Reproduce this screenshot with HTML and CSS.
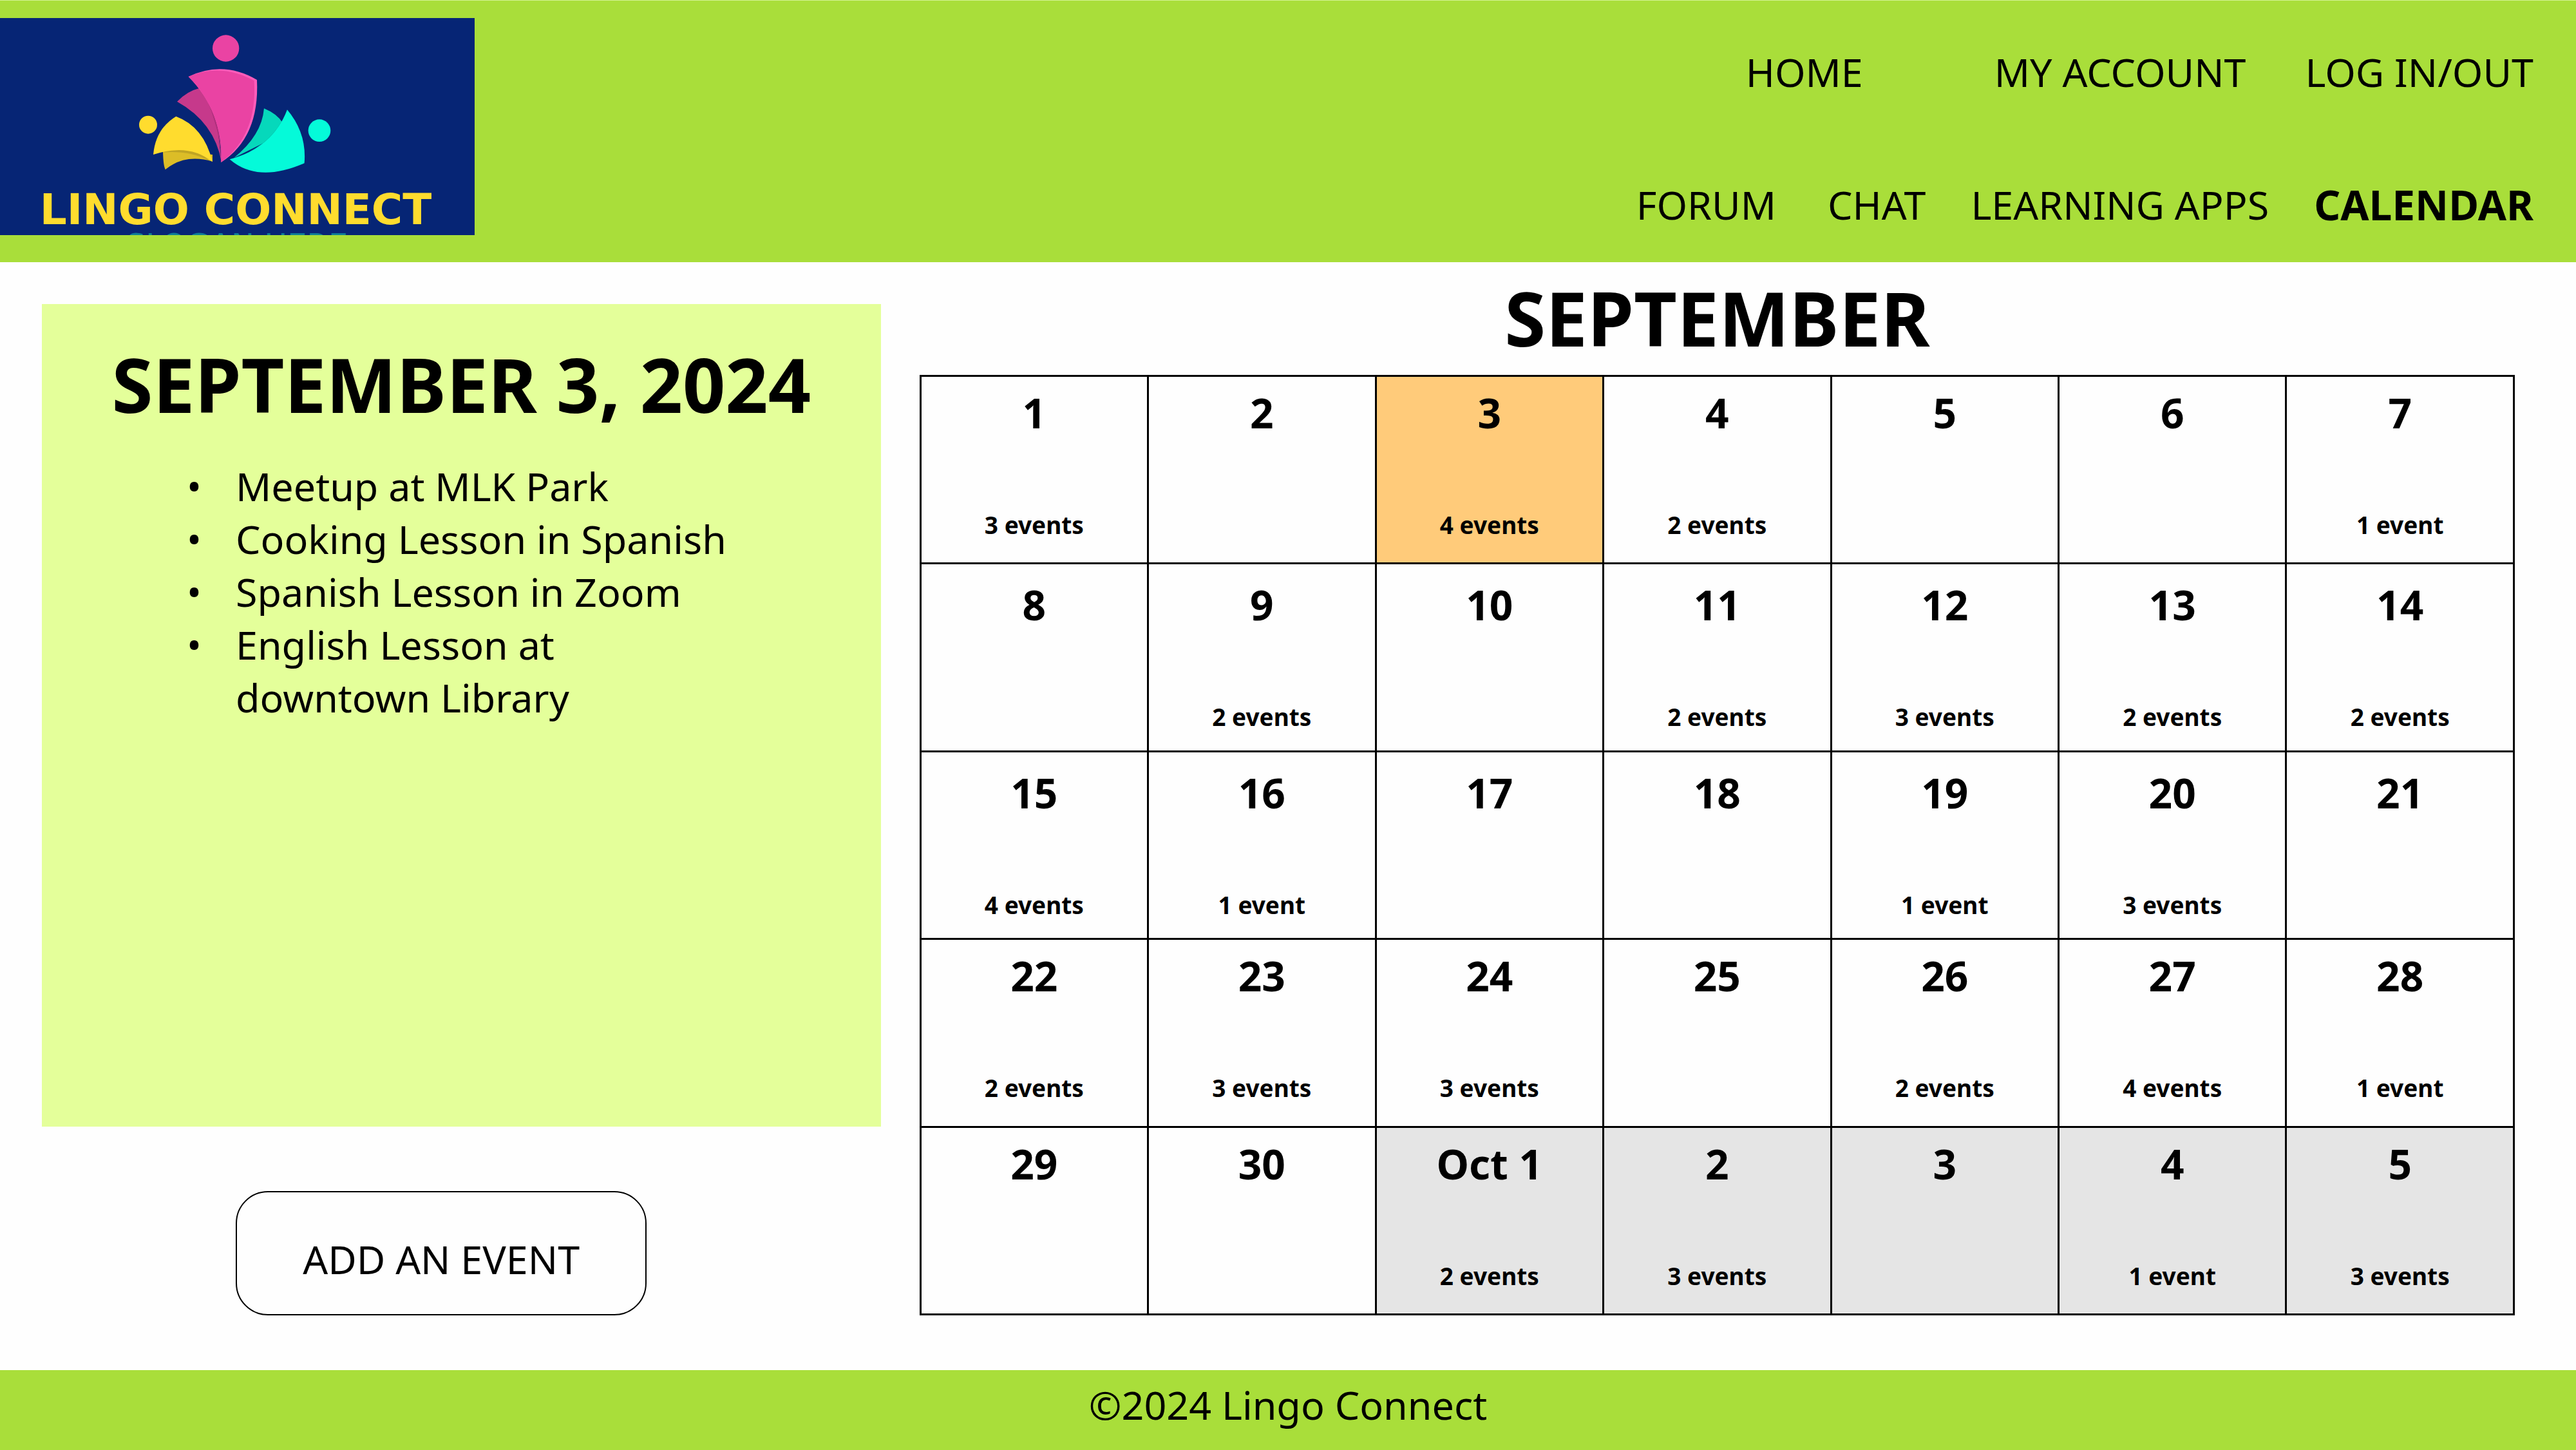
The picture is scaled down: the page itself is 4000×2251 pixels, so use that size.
FILE: index.html
```html
<!DOCTYPE html>
<html lang="en">
<head>
<meta charset="utf-8">
<title>Lingo Connect – Calendar</title>
<link rel="stylesheet" href="styles.css">
</head>
<body>
<header class="site-header">
  <a class="logo" href="#" aria-label="Lingo Connect">
    <svg class="logo-art" viewBox="0 0 737 337">
      <g transform="translate(200 12) scale(.3333)">
        <circle cx="452" cy="105" r="62" fill="#ea43a3"/>
        <path fill="#c6398b" d="M225 353Q270 305 330 290L400 350L432 636Q400 450 225 353Z"/>
        <path fill="#ad2f7c" d="M330 290Q425 380 432 636Q425 520 398 440Q375 350 330 290Z"/>
        <path fill="#ff5cba" d="M278 237Q440 160 597 252Q610 520 430 636Q440 400 278 237Z"/>
        <path fill="#ea43a3" d="M278 237Q430 172 584 256Q600 510 430 636Q440 400 278 237Z"/>
        <circle cx="90" cy="461" r="42" fill="#ffdc2e"/>
        <path fill="#dcbd27" d="M159 580L390 600L390 632Q260 595 170 670Q160 650 159 580Z"/>
        <path fill="#c0a524" d="M159 590Q280 580 375 628Q300 560 200 570Z"/>
        <path fill="#ffdc2e" d="M114 600Q125 480 220 422Q350 470 390 634Q280 545 114 600Z"/>
        <circle cx="888" cy="488" r="52" fill="#05fad9"/>
        <path fill="#06d8bb" d="M630 385Q690 410 715 450L680 520L490 615Q620 510 630 385Z"/>
        <path fill="#05bfa8" d="M712 445Q640 570 490 615Q660 560 715 450Z"/>
        <path fill="#05fad9" d="M738 391Q830 500 818 640Q600 735 470 622Q670 570 738 391Z"/>
      </g>
      <text class="logo-name" x="366" y="320" text-anchor="middle">LINGO CONNECT</text>
      <text class="logo-slogan" x="368" y="369" text-anchor="middle">SLOGAN HERE</text>
    </svg>
  </a>
  <nav class="site-nav">
    <div class="nav-row nav-account">
      <a href="#">HOME</a>
      <a href="#">MY ACCOUNT</a>
      <a href="#">LOG IN/OUT</a>
    </div>
    <div class="nav-row nav-sections">
      <a href="#">FORUM</a>
      <a href="#">CHAT</a>
      <a href="#">LEARNING APPS</a>
      <a class="current" href="#" aria-current="page">CALENDAR</a>
    </div>
  </nav>
</header>
<main class="content">
  <section class="sidebar">
    <div class="day-panel">
      <h2 class="title">SEPTEMBER 3, 2024</h2>
      <ul class="event-list">
        <li>Meetup at MLK Park</li>
        <li>Cooking Lesson in Spanish</li>
        <li>Spanish Lesson in Zoom</li>
        <li>English Lesson at<br>downtown Library</li>
      </ul>
    </div>
    <button class="add-event" type="button">ADD AN EVENT</button>
  </section>
  <section class="month">
    <h1 class="title">SEPTEMBER</h1>
    <table class="calendar">
      <tbody>
        <tr>
          <td><b>1</b><span>3 events</span></td>
          <td><b>2</b></td>
          <td class="selected"><b>3</b><span>4 events</span></td>
          <td><b>4</b><span>2 events</span></td>
          <td><b>5</b></td>
          <td><b>6</b></td>
          <td><b>7</b><span>1 event</span></td>
        </tr>
        <tr class="roomy">
          <td><b>8</b></td>
          <td><b>9</b><span>2 events</span></td>
          <td><b>10</b></td>
          <td><b>11</b><span>2 events</span></td>
          <td><b>12</b><span>3 events</span></td>
          <td><b>13</b><span>2 events</span></td>
          <td><b>14</b><span>2 events</span></td>
        </tr>
        <tr class="roomy">
          <td><b>15</b><span>4 events</span></td>
          <td><b>16</b><span>1 event</span></td>
          <td><b>17</b></td>
          <td><b>18</b></td>
          <td><b>19</b><span>1 event</span></td>
          <td><b>20</b><span>3 events</span></td>
          <td><b>21</b></td>
        </tr>
        <tr>
          <td><b>22</b><span>2 events</span></td>
          <td><b>23</b><span>3 events</span></td>
          <td><b>24</b><span>3 events</span></td>
          <td><b>25</b></td>
          <td><b>26</b><span>2 events</span></td>
          <td><b>27</b><span>4 events</span></td>
          <td><b>28</b><span>1 event</span></td>
        </tr>
        <tr>
          <td><b>29</b></td>
          <td><b>30</b></td>
          <td class="other"><b>Oct 1</b><span>2 events</span></td>
          <td class="other"><b>2</b><span>3 events</span></td>
          <td class="other"><b>3</b></td>
          <td class="other"><b>4</b><span>1 event</span></td>
          <td class="other"><b>5</b><span>3 events</span></td>
        </tr>
      </tbody>
    </table>
  </section>
</main>
<footer class="site-footer">©2024 Lingo Connect</footer>
</body>
</html>
```
FILE: styles.css
```css
* {
  box-sizing: border-box;
}

body {
  margin: 0;
  min-height: 100vh;
  display: flex;
  flex-direction: column;
  background: #fefefe;
  color: #000;
  font: 61px/82px "Noto Sans", "Open Sans", sans-serif;
}

a {
  color: inherit;
  text-decoration: none;
}

.site-header {
  display: flex;
  justify-content: space-between;
  align-items: flex-start;
  padding: 27px 66px 42px 0;
  border-top: 1px solid #d4f294;
  background: #a9de3a;
}

.logo {
  display: block;
  width: 737px;
  background: #062575;
}

.logo-art {
  display: block;
  width: 100%;
}

.logo-name {
  fill: #ffdc2e;
  font: bold 66px "DejaVu Sans", sans-serif;
}

.logo-slogan {
  fill: #0e7f96;
  font: 48px "DejaVu Sans", sans-serif;
}

.site-nav {
  display: flex;
  flex-direction: column;
  gap: 124px;
  padding-top: 43px;
}

.nav-row {
  display: flex;
  justify-content: flex-end;
}

.nav-account {
  gap: 92px;
}

.nav-account a:first-child {
  margin-right: 112px;
}

.nav-sections {
  gap: 70px;
}

.nav-sections a:first-child {
  margin-right: 10px;
}

.current {
  font-size: 64px;
  font-weight: bold;
}

.content {
  flex: 1;
  display: grid;
  grid-template-columns: 1303fr 2478fr;
  column-gap: 60px;
  padding: 26px 95px 85px 65px;
}

.sidebar {
  display: flex;
  flex-direction: column;
  padding-top: 39px;
}

.day-panel {
  flex: 1;
  background: #e4ff9a;
}

.title {
  margin: 0;
  font-size: 116px;
  line-height: 120px;
  text-align: center;
}

.day-panel .title {
  padding-top: 64px;
}

.event-list {
  margin: 58px 0 0;
  padding-left: 301px;
  list-style: none;
}

.event-list li::before {
  content: "•";
  float: left;
  margin-left: -76px;
}

.add-event {
  width: 49%;
  margin: 100px 0 0 301px;
  padding: 63px 0 44px;
  border: 2px solid #000;
  border-radius: 50px;
  background: transparent;
  color: inherit;
  font: inherit;
}

.month {
  display: flex;
  flex-direction: column;
}

.calendar {
  flex: 1;
  width: 100%;
  margin-top: 29px;
  border-collapse: collapse;
  table-layout: fixed;
}

.calendar td {
  height: 291px;
  padding: 15px 0 0;
  border: 3px solid #000;
  text-align: center;
  vertical-align: top;
}

.calendar .roomy td {
  padding-top: 22px;
}

.calendar b,
.calendar span {
  display: block;
}

.calendar b {
  font-size: 64px;
}

.calendar span {
  margin-top: 103px;
  font-size: 37px;
  font-weight: bold;
  line-height: 60px;
}

.calendar .selected {
  background: #ffcb7a;
}

.calendar .other {
  background: #e5e5e5;
}

.site-footer {
  padding: 13px 0 29px;
  background: #a9de3a;
  text-align: center;
}
```
